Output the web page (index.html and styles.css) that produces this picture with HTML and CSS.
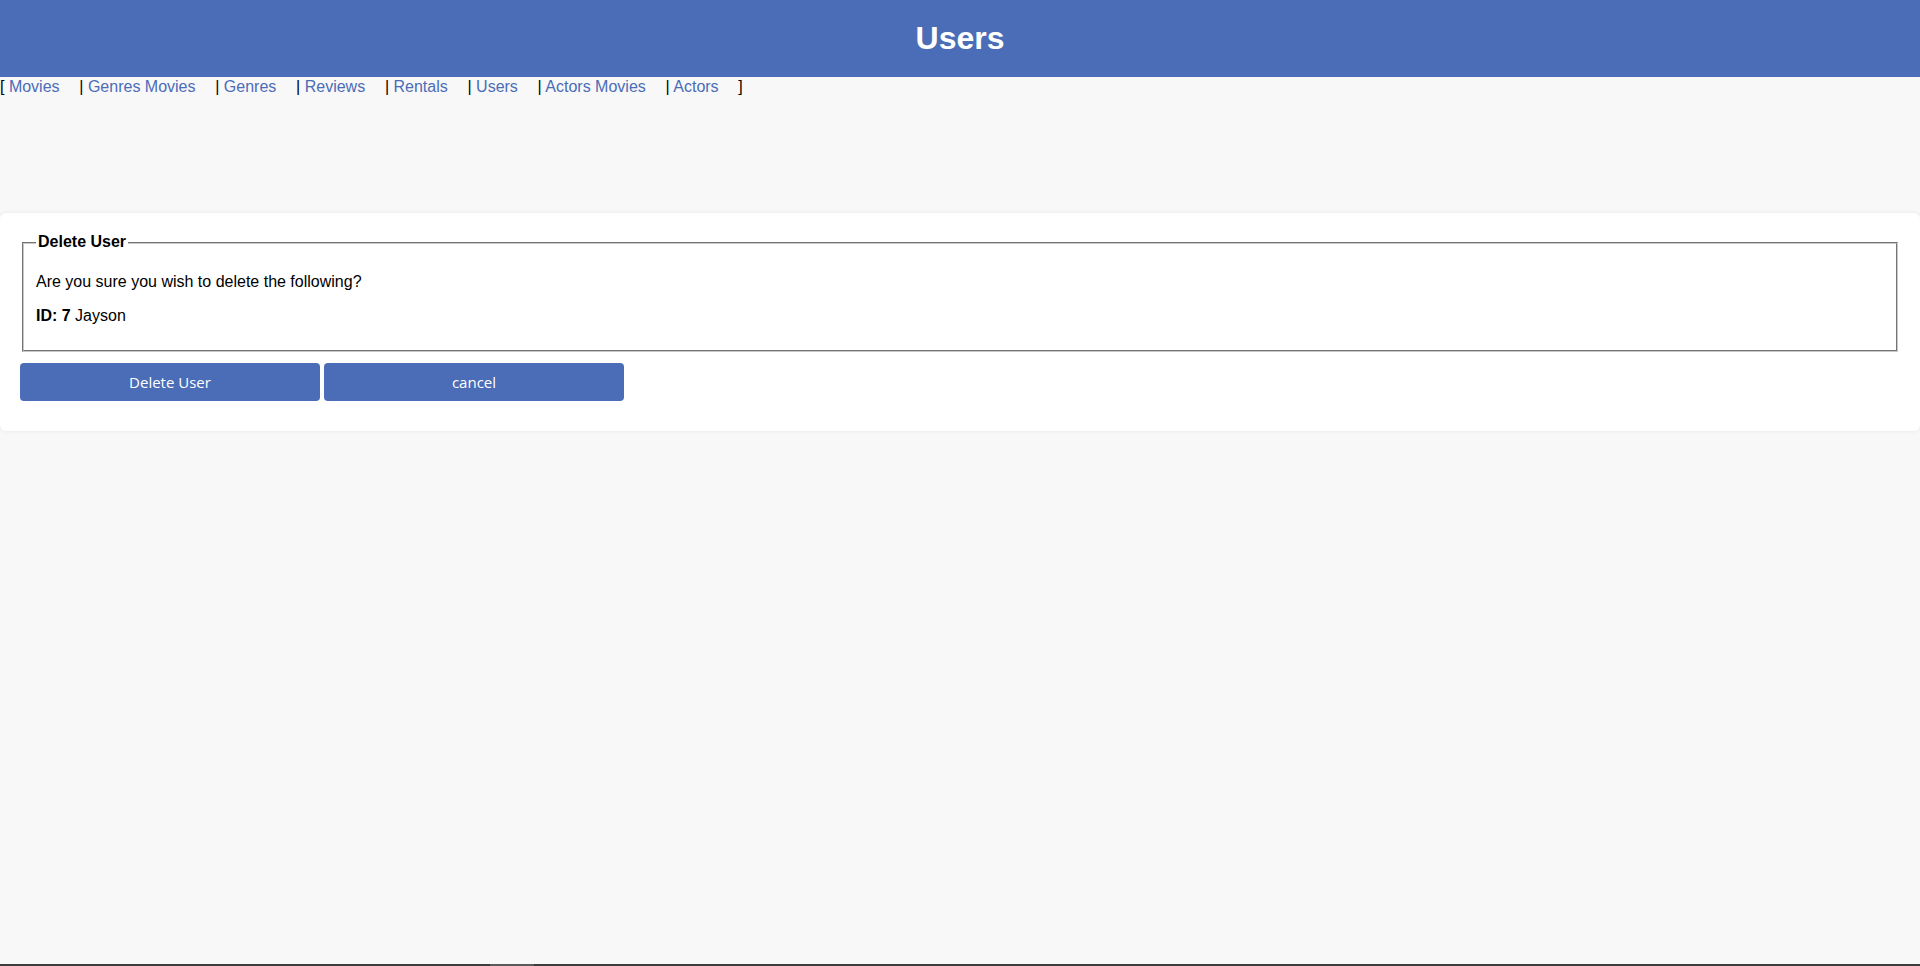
FILE: index.html
```html
<!DOCTYPE html>
<html lang="en">
<head>
<meta charset="utf-8">
<title>Users</title>
<link rel="stylesheet" href="styles.css">
</head>
<body>
<header class="topbar">
  <h1 class="title">Users</h1>
</header>
<nav class="nav">[ <a href="#" class="nav-link">Movies</a> | <a href="#" class="nav-link">Genres Movies</a> | <a href="#" class="nav-link">Genres</a> | <a href="#" class="nav-link">Reviews</a> | <a href="#" class="nav-link">Rentals</a> | <a href="#" class="nav-link">Users</a> | <a href="#" class="nav-link">Actors Movies</a> | <a href="#" class="nav-link">Actors</a> ]</nav>
<main class="card">
  <fieldset class="box">
    <legend class="legend">Delete User</legend>
    <p class="line">Are you sure you wish to delete the following?</p>
    <p class="line"><b>ID: 7</b> Jayson</p>
  </fieldset>
  <div class="actions">
    <button class="btn" type="button">Delete User</button>
    <button class="btn" type="button">cancel</button>
  </div>
</main>
<div class="bottom-strip"><span class="strip-thumb"></span></div>
</body>
</html>
```
FILE: styles.css
```css
html, body {
  margin: 0;
  padding: 0;
}
body {
  background: #f8f8f8;
  font-family: "Liberation Sans", Arial, sans-serif;
  font-size: 16px;
  color: #000;
  min-height: 966px;
}
.topbar {
  background: #4b6cb7;
  height: 77px;
  box-sizing: border-box;
  padding-top: 20px;
}
.title {
  margin: 0;
  color: #fff;
  text-align: center;
  font-size: 32px;
  font-weight: bold;
  line-height: 37px;
}
.nav {
  padding-top: 1px;
  line-height: 18.4px;
  white-space: nowrap;
}
.nav-link {
  color: #4b6cb7;
  text-decoration: none;
  padding-right: 15.3px;
}
.card {
  display: block;
  margin-top: 117px;
  background: #fff;
  border-radius: 6px;
  box-shadow: 0 0 4px rgba(0, 0, 0, 0.08);
  padding: 20px 20px 30px 20px;
}
.box {
  margin: 0 2px;
  padding: 5px 12px 8px 12px;
  border: 2px groove #c8c8c8;
}
.legend {
  font-weight: bold;
  padding: 0 2px;
  line-height: 18.4px;
}
.line {
  margin: 16px 0;
  line-height: 18.4px;
}
.actions {
  display: flex;
  gap: 4px;
  margin-top: 11px;
}
.btn {
  width: 300px;
  height: 38px;
  background: #4b6cb7;
  color: #fff;
  border: none;
  border-radius: 4px;
  font-family: "Open Sans", "Noto Sans", sans-serif;
  font-size: 15px;
  cursor: pointer;
}
.bottom-strip {
  position: fixed;
  left: 0;
  right: 0;
  bottom: 0;
  height: 2px;
  background: #3c3c3c;
}
.strip-thumb {
  display: block;
  margin-left: 490px;
  width: 44px;
  height: 2px;
  background: #5a5a5a;
}
```
